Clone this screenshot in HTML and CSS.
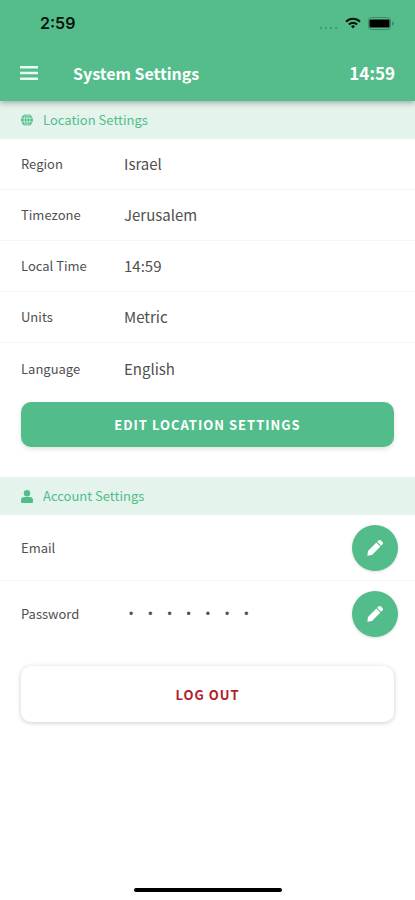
FILE: index.html
```html
<!DOCTYPE html>
<html lang="en">
<head>
    <meta charset="UTF-8">
    <meta name="viewport" content="width=device-width, initial-scale=1.0">
    <title>System Settings</title>
    <link rel="stylesheet" href="styles.css">
</head>
<body>
    <header class="header">
        <div class="status-bar">
            <span class="status-time">2:59</span>
            <div class="status-icons">
                <svg width="19" height="4" viewBox="0 0 19 4" fill="#459a74">
                    <circle cx="2" cy="2" r="1.2"/>
                    <circle cx="7" cy="2" r="1.2"/>
                    <circle cx="12" cy="2" r="1.2"/>
                    <circle cx="17" cy="2" r="1.2"/>
                </svg>
                <svg width="16" height="12" viewBox="0 0 18 13" fill="none" stroke="#06150e" stroke-width="2.4">
                    <path d="M1.200 5a11 11 0 0 1 15.600 0"/>
                    <path d="M4.400 8.200a6.500 6.500 0 0 1 9.200 0"/>
                    <path d="M9 12.600 6.700 10.200a3.300 3.300 0 0 1 4.600 0z" fill="#06150e" stroke="none"/>
                </svg>
                <svg width="27" height="13" viewBox="0 0 27 13">
                    <rect x="0.5" y="0.5" width="22" height="12" rx="3" fill="none" stroke="#3b8a68"/>
                    <rect x="1.5" y="2.500" width="20" height="8" rx="1" fill="#000"/>
                    <path d="M24 4.500c2.400.6 2.400 3.400 0 4z" fill="#3b8a68"/>
                </svg>
            </div>
        </div>
        <div class="toolbar">
            <button class="menu-btn" aria-label="Menu">
                <svg width="18" height="14" viewBox="0 0 18 14" fill="#e9fbf2">
                    <path d="M0 0h18v2.600H0zM0 5.700h18v2.600H0zM0 11.400h18V14H0z"/>
                </svg>
            </button>
            <h1>System Settings</h1>
            <span class="clock">14:59</span>
        </div>
    </header>

    <main>
        <!-- Location -->
        <section>
            <h2 class="section-title">
                <svg width="12" height="12" viewBox="0 0 12 12">
                    <circle cx="6" cy="6" r="6" fill="#52bd8b"/>
                    <path d="M0 4.200h12M0 7.800h12M6 0v12" fill="none" stroke="#e4f4ec" stroke-width="0.7"/>
                    <ellipse cx="6" cy="6" rx="2.800" ry="6" fill="none" stroke="#e4f4ec" stroke-width="0.7"/>
                </svg>
                Location Settings
            </h2>
            <dl class="rows">
                <div class="row"><dt>Region</dt><dd>Israel</dd></div>
                <div class="row"><dt>Timezone</dt><dd>Jerusalem</dd></div>
                <div class="row"><dt>Local Time</dt><dd>14:59</dd></div>
                <div class="row"><dt>Units</dt><dd>Metric</dd></div>
                <div class="row"><dt>Language</dt><dd>English</dd></div>
            </dl>
            <button class="btn btn-primary">EDIT LOCATION SETTINGS</button>
        </section>

        <!-- Account -->
        <section>
            <h2 class="section-title">
                <svg width="12" height="13" viewBox="0 0 12 13" fill="#52bd8b">
                    <circle cx="6" cy="3.200" r="3.200"/>
                    <path d="M3.200 7h5.600C10.600 7 12 8.300 12 10v1.700c0 .7-.5 1.300-1.200 1.300H1.200C.5 13 0 12.400 0 11.700V10c0-1.700 1.400-3 3.200-3z"/>
                </svg>
                Account Settings
            </h2>
            <dl class="rows">
                <div class="row row-tall">
                    <dt>Email</dt>
                    <dd>
                        <button class="edit-btn" aria-label="Edit email">
                            <svg width="16" height="16" viewBox="0 0 16 16" fill="#fff">
                                <path d="M0.300 15.700 1 11 9.400 2.600l4 4L5 15z"/>
                                <path d="M10.200 1.800 11.400.6c.8-.8 1.800-.8 2.600 0L15.400 2c.8.8.8 1.800 0 2.600L14.200 5.800z"/>
                            </svg>
                        </button>
                    </dd>
                </div>
                <div class="row row-tall">
                    <dt>Password</dt>
                    <dd>
                        <span class="dots">
                            <span>•</span><span>•</span><span>•</span><span>•</span><span>•</span><span>•</span><span>•</span>
                        </span>
                        <button class="edit-btn" aria-label="Edit password">
                            <svg width="16" height="16" viewBox="0 0 16 16" fill="#fff">
                                <path d="M0.300 15.700 1 11 9.400 2.600l4 4L5 15z"/>
                                <path d="M10.200 1.800 11.400.6c.8-.8 1.800-.8 2.600 0L15.400 2c.8.8.8 1.800 0 2.600L14.200 5.800z"/>
                            </svg>
                        </button>
                    </dd>
                </div>
            </dl>
            <button class="btn btn-logout">LOG OUT</button>
        </section>
    </main>

    <div class="home-indicator"></div>
</body>
</html>
```
FILE: styles.css
```css
* {
    margin: 0;
    padding: 0;
    box-sizing: border-box;
}

body {
    display: flex;
    flex-direction: column;
    min-height: 100vh;
    font-family: "Noto Sans CJK KR", "Noto Sans", sans-serif;
    font-size: 13px;
    line-height: 20px;
    color: #505050;
    background-color: #fff;
}

button {
    font-family: inherit;
    border: none;
    cursor: pointer;
}

svg {
    display: block;
}

/* Header */
.header {
    position: relative;
    color: #fff;
    background-color: #54bd8b;
    box-shadow: 0 2px 6px rgba(0, 0, 0, 0.3);
}

.status-bar {
    display: flex;
    align-items: center;
    justify-content: space-between;
    height: 46px;
    padding: 0 20px 0 40px;
}

.status-time {
    font-family: Inter, sans-serif;
    font-size: 16px;
    font-weight: 600;
    color: #06150e;
}

.status-icons {
    display: flex;
    align-items: center;
    gap: 7px;
}

.status-icons svg:first-child {
    align-self: flex-end;
}

.toolbar {
    display: flex;
    align-items: center;
    height: 55px;
    padding: 0 20px 2px;
}

.menu-btn {
    width: 53px;
    background: none;
}

.toolbar h1 {
    flex: 1;
    font-size: 16px;
    font-weight: 700;
}

.clock {
    font-size: 17px;
    font-weight: 700;
}

/* Sections */
.section-title {
    display: flex;
    align-items: center;
    gap: 10px;
    height: 38px;
    padding: 0 21px;
    font-size: 13px;
    font-weight: 400;
    color: #52bd8b;
    background-color: #e4f4ec;
}

.row {
    display: flex;
    align-items: center;
    height: 51px;
    padding: 0 17px 0 21px;
    border-bottom: 1px solid #f5f5f5;
}

.row:last-child {
    border-bottom: none;
}

.row-tall {
    height: 66px;
}

.row dt {
    width: 103px;
}

.row dd {
    display: flex;
    flex: 1;
    align-items: center;
    font-size: 15px;
}

.dots {
    display: flex;
    gap: 15px;
    padding-left: 5px;
    font-family: "Liberation Sans", sans-serif;
    font-size: 12px;
}

/* Buttons */
.edit-btn {
    display: flex;
    align-items: center;
    justify-content: center;
    width: 46px;
    height: 46px;
    margin-left: auto;
    border-radius: 50%;
    background-color: #52bd8b;
    box-shadow: 0 1px 3px rgba(0, 0, 0, 0.15);
}

.btn {
    display: block;
    width: calc(100% - 42px);
    margin: 8px 20px 30px 21px;
    font-size: 13px;
    font-weight: 700;
    letter-spacing: 1px;
    border-radius: 10px;
}

.btn-primary {
    height: 45px;
    color: #fff;
    background-color: #52bd8b;
    box-shadow: 0 2px 5px rgba(0, 0, 0, 0.12);
}

.btn-logout {
    height: 56px;
    margin-top: 19px;
    color: #b3202c;
    background-color: #fff;
    box-shadow: 0 1px 5px rgba(0, 0, 0, 0.2);
}

.home-indicator {
    width: 148px;
    height: 4px;
    margin: auto auto 8px;
    border-radius: 2px;
    background-color: #000;
}
```
